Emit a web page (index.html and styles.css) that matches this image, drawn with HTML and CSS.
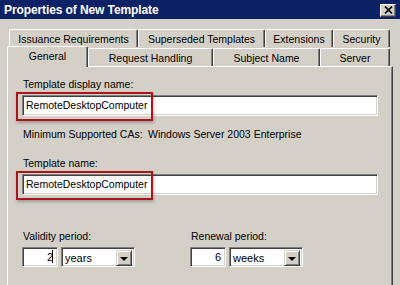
FILE: index.html
```html
<!DOCTYPE html>
<html lang="en">
<head>
  <meta charset="UTF-8">
  <title>Properties of New Template</title>
  <link rel="stylesheet" href="styles.css">
</head>
<body>

<div class="window">
  <div class="titlebar">
    <span class="title">Properties of New Template</span>
    <span class="close-btn">
      <svg width="9" height="8" viewBox="0 0 9 8"><path d="M1 0.5 L8 7.5 M8 0.5 L1 7.5" stroke="#000" stroke-width="1.7"/></svg>
    </span>
  </div>

  <div class="tabs">
    <div class="tab-row back">
      <div class="tab t-issuance">Issuance Requirements</div>
      <div class="tab t-superseded">Superseded Templates</div>
      <div class="tab t-extensions">Extensions</div>
      <div class="tab t-security">Security</div>
    </div>
    <div class="tab-row front">
      <div class="tab selected t-general">General</div>
      <div class="tab t-request">Request Handling</div>
      <div class="tab t-subject">Subject Name</div>
      <div class="tab t-server">Server</div>
    </div>
  </div>

  <div class="panel">
    <div class="label">Template display name:</div>
    <div class="marked">
      <div class="textbox">RemoteDesktopComputer</div>
      <span class="redbox"></span>
    </div>

    <div class="info-row">
      <span class="info-key">Minimum Supported CAs:</span>
      <span>Windows Server 2003 Enterprise</span>
    </div>

    <div class="label second">Template name:</div>
    <div class="marked">
      <div class="textbox">RemoteDesktopComputer</div>
      <span class="redbox"></span>
    </div>

    <div class="periods">
      <div class="period validity">
        <div class="label">Validity period:</div>
        <div class="period-inputs">
          <div class="spinbox">2<span class="caret"></span></div>
          <div class="combo">
            <span class="combo-value">years</span>
            <span class="combo-btn"><span class="arrow"></span></span>
          </div>
        </div>
      </div>
      <div class="period">
        <div class="label">Renewal period:</div>
        <div class="period-inputs">
          <div class="spinbox wide">6</div>
          <div class="combo">
            <span class="combo-value">weeks</span>
            <span class="combo-btn"><span class="arrow"></span></span>
          </div>
        </div>
      </div>
    </div>
  </div>
</div>

</body>
</html>
```

FILE: styles.css
```css
body {
  margin: 0;
  padding: 0;
  background-color: #d4d0c8;
  font-family: 'Liberation Sans', Arial, sans-serif;
  font-size: 10.5px;
  color: #000;
}
.window {
  width: 400px;
  height: 285px;
  overflow: hidden;
}
.titlebar {
  height: 19px;
  background-color: #0c2166;
  display: flex;
  align-items: center;
  justify-content: space-between;
  padding: 0 4px 0 4px;
}
.title {
  color: #fff;
  font-weight: bold;
  font-size: 12px;
  letter-spacing: -0.1px;
}
.close-btn {
  box-sizing: border-box;
  width: 16px;
  height: 13px;
  margin-top: 1px;
  background-color: #d4d0c8;
  border-top: 1px solid #fff;
  border-left: 1px solid #fff;
  border-right: 1px solid #404040;
  border-bottom: 1px solid #404040;
  box-shadow: inset -1px -1px #808080;
  display: flex;
  align-items: center;
  justify-content: center;
}
.tabs {
  padding-top: 10px;
}
.tab-row {
  display: flex;
}
.tab-row.back {
  margin-left: 9px;
  height: 18px;
}
.tab-row.front {
  margin-left: 7px;
  height: 19px;
  align-items: flex-end;
}
.tab {
  box-sizing: border-box;
  height: 18px;
  border-top: 1px solid #fff;
  border-left: 1px solid #fff;
  border-right: 1px solid #404040;
  box-shadow: inset -1px 0 #808080;
  border-radius: 2px 2px 0 0;
  text-align: center;
  line-height: 18px;
  white-space: nowrap;
}
.tab.selected {
  position: relative;
  z-index: 1;
  height: 21px;
  margin-bottom: -1px;
  background-color: #d4d0c8;
  line-height: 18px;
}
.t-issuance { width: 129px; }
.t-superseded { width: 127px; }
.t-extensions { width: 68px; }
.t-security { width: 57px; }
.t-general { width: 81px; }
.t-request { width: 125px; }
.t-subject { width: 107px; }
.t-server { width: 70px; }

.panel {
  margin: 0 7px 0 7px;
  height: 230px;
  border-top: 1px solid #fff;
  border-left: 1px solid #fff;
  border-right: 1px solid #404040;
  box-shadow: inset -1px 0 #808080;
  padding: 11px 0 0 14px;
}
.label {
  line-height: 13px;
  margin-bottom: 4px;
  padding-left: 1px;
}
.label.second {
  margin-top: 16px;
}
.marked {
  position: relative;
  width: 356px;
}
.textbox {
  box-sizing: border-box;
  width: 356px;
  height: 21px;
  background-color: #fff;
  border: 1px solid;
  border-color: #808080 #fff #fff #808080;
  box-shadow: inset 1px 1px #404040, inset -1px -1px #d4d0c8;
  padding-left: 3px;
  line-height: 19px;
  white-space: nowrap;
}
.redbox {
  position: absolute;
  left: -6px;
  top: -3px;
  box-sizing: border-box;
  width: 137px;
  height: 29px;
  border: 2.5px solid #a9151b;
  box-shadow: 1px 2px 3px rgba(0,0,0,0.25);
}
.info-row {
  display: flex;
  line-height: 13px;
  margin-top: 12px;
  padding-left: 1px;
}
.info-key {
  width: 125px;
}
.periods {
  display: flex;
  margin-top: 35px;
}
.period.validity {
  width: 168px;
}
.period-inputs {
  display: flex;
  gap: 3px;
}
.spinbox {
  box-sizing: border-box;
  width: 36px;
  height: 20px;
  background-color: #fff;
  border: 1px solid;
  border-color: #808080 #fff #fff #808080;
  box-shadow: inset 1px 1px #404040, inset -1px -1px #d4d0c8;
  text-align: right;
  padding-right: 4px;
  line-height: 18px;
  font-size: 11px;
}
.caret {
  display: inline-block;
  width: 1px;
  height: 13px;
  background-color: #000;
  margin-left: -1px;
  vertical-align: -2px;
}
.combo {
  box-sizing: border-box;
  width: 74px;
  height: 20px;
  background-color: #fff;
  border: 1px solid;
  border-color: #808080 #fff #fff #808080;
  box-shadow: inset 1px 1px #404040, inset -1px -1px #d4d0c8;
  display: flex;
  justify-content: space-between;
  padding: 2px 2px 2px 3px;
}
.combo-value {
  line-height: 16px;
  font-size: 11px;
}
.combo-btn {
  box-sizing: border-box;
  width: 16px;
  height: 16px;
  background-color: #d4d0c8;
  border-top: 1px solid #d4d0c8;
  border-left: 1px solid #d4d0c8;
  border-right: 1px solid #404040;
  border-bottom: 1px solid #404040;
  box-shadow: inset 1px 1px #fff, inset -1px -1px #808080;
  display: flex;
  align-items: center;
  justify-content: center;
}
.arrow {
  width: 0;
  height: 0;
  border-left: 4px solid transparent;
  border-right: 4px solid transparent;
  border-top: 4px solid #000;
  margin-top: 1px;
}
```
